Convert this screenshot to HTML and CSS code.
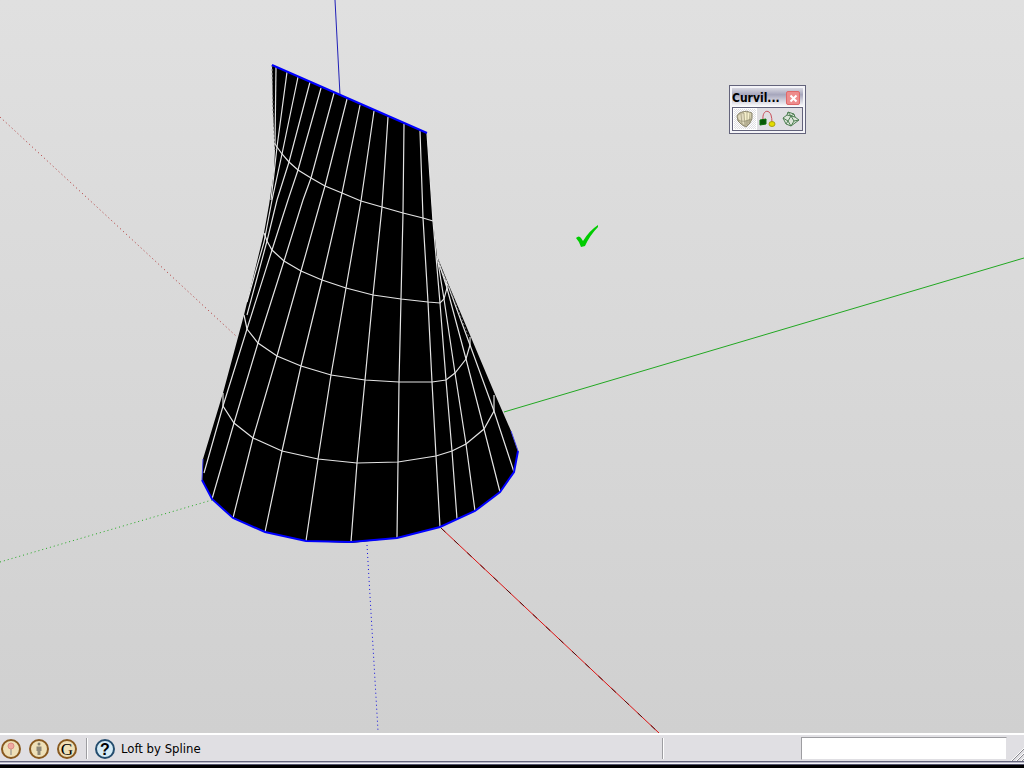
FILE: index.html
```html
<!DOCTYPE html>
<html lang="en">
<head>
<meta charset="utf-8">
<title>Loft by Spline</title>
<link rel="stylesheet" href="styles.css">
</head>
<body>
<main class="viewport">
  <svg class="scene" viewBox="0 0 1024 733" preserveAspectRatio="xMinYMin slice" role="img" aria-label="Lofted surface">
    <g class="axes">
      <path class="axis-blue" d="M335 0L340 95"/>
      <path class="axis-blue dotted" d="M367 545L378 731"/>
      <path class="axis-green" d="M504 412L1024 258"/>
      <path class="axis-green dotted" d="M0 562L212 500"/>
      <path class="axis-red" d="M441 528L659 733"/>
      <path class="axis-dash" d="M441 528L659 733"/>
      <path class="axis-red dotted" d="M0 117L236 336"/>
    </g>
    <path class="surface" d="M272 65L427 133L433 221L437 256L448 283L470 335L494 392L511 431L518 451L514 472L500 492L475 511L440 527L397 538L351 543L306 541L265 532L233 518L212 499L202 480L203 459L223 393L244 315L264 233L269 205L274 172L275 150L273 110Z"/>
    <g class="mesh">
      <path d="M275 144L277 147L282 154L289 162L298 170L311 178L325 186L342 193L361 201L382 207L403 213L423 218L433 221"/>
      <path d="M264 233L267 241L272 250L284 261L301 271L322 280L346 288L373 295L401 299L428 302L440 303L444 299L447 288L446 280"/>
      <path d="M244 315L247 329L258 343L277 356L301 366L331 375L365 380L399 382L432 382L446 380L455 373L466 359L470 345L470 337"/>
      <path d="M223 393L223 406L234 423L253 438L282 451L318 459L357 463L398 462L436 456L452 451L466 444L484 429L494 411L494 395"/>
      <path d="M276 67L275 144"/>
      <path d="M287 72L277 147L271 200"/>
      <path d="M298 77L282 154L272 200L264 242L247 302"/>
      <path d="M310 82L289 162L277 200L267 241L247 315"/>
      <path d="M321 88L298 170L288 200L272 250L247 329L223 406L204 473"/>
      <path d="M334 93L311 178L303 200L284 261L258 343L234 423L212 499"/>
      <path d="M347 99L325 186L321 200L301 271L277 356L253 438L233 518"/>
      <path d="M360 105L342 193L322 280L301 366L282 451L265 532"/>
      <path d="M374 111L361 201L346 288L331 375L318 459L306 541"/>
      <path d="M388 117L382 207L373 295L365 380L357 463L351 542"/>
      <path d="M404 124L403 213L401 299L399 382L398 462L397 538"/>
      <path d="M420 131L423 218L428 302L432 382L436 456L440 527"/>
      <path d="M427 133L433 221L440 303L446 380L452 451L457 519"/>
      <path d="M437 256L444 299L455 373L466 444L475 511"/>
      <path d="M438 260L447 288L466 359L484 429L500 492"/>
      <path d="M438 262L449 288L470 345L494 411L514 472"/>
      <path class="faint" d="M438 260L455 302L470 340M272 65L273 110L275 150"/>
    </g>
    <path class="profile" d="M272 65L427 133M202 480L212 499L233 518L265 532L306 541L351 542L397 538L440 527L475 511L500 492L514 472L518 451"/>
    <path class="profile-thin" d="M203 459L202 480M511 431L518 451"/>
    <path class="check" d="M576 238Q579 235 581 238L583 241Q589 231 598 225L598 227Q590 235 585 246L581 247Q579 241 576 238Z"/>
  </svg>

  <section class="palette" aria-label="Curviloft">
    <header class="palette-head">
      <span class="palette-title">Curvil...</span>
      <button class="close" type="button" aria-label="Close"><svg width="9" height="9" viewBox="0 0 9 9"><path d="M1.500 1.500L7.500 7.500M7.500 1.500L1.500 7.500"/></svg></button>
    </header>
    <div class="tools">
      <button class="tool active" type="button" aria-label="Loft by Spline"><svg width="18" height="18" viewBox="0 0 18 18">
        <path d="M1 6Q2 3 6 2Q10 0 16 3Q17 9 14 13L10 17Q5 15 2 11Z" fill="#c4bd9f" stroke="#8d8870"/>
        <path d="M2 6Q5 3 8 4L9 15Q3 12 2 6Z" fill="#e2dbc0"/>
        <path d="M8 2L15 3L14 9L8 11Z" fill="#f6f0cc"/>
        <path d="M5 4L6 14M8 3L9 16M11 2L11 15M14 3L13 13M2 10Q8 13 15 9" fill="none" stroke="#8d886c" stroke-width=".6"/>
      </svg></button>
      <button class="tool" type="button" aria-label="Loft along Path"><svg width="18" height="18" viewBox="0 0 18 18">
        <path d="M4 10C3 0 10 -1 12 5Q13 8 13 13" fill="none" stroke="#c9515b"/>
        <path d="M1 10L7 9L7 14L1 15Z" fill="#075807" stroke="#087008"/>
        <ellipse cx="13" cy="14" rx="3" ry="2.500" fill="#e4dc00" stroke="#aaa412"/>
      </svg></button>
      <button class="tool" type="button" aria-label="Skinning"><svg width="18" height="18" viewBox="0 0 18 18">
        <path d="M1 8L5 5L6 2L12 4L13 7L17 10L9 16L4 14Z" fill="#dce5da" stroke="#4e7f53"/>
        <path d="M5 5L9 6L13 7M6 2L9 6L12 4M1 8L6 11L9 6L12 11L17 10M4 14L6 11L9 16L12 11" fill="none" stroke="#4e7f53"/>
      </svg></button>
    </div>
  </section>
</main>

<footer class="status">
  <div class="status-row">
    <div class="badges">
      <button class="badge" type="button" aria-label="Geo-location"><svg width="22" height="22" viewBox="0 0 22 22"><circle class="ring" cx="11" cy="11" r="9"/><path d="M10 11H12V17H10Z" fill="#b9b29f"/><circle cx="11" cy="8" r="3" fill="#efa9a0" stroke="#dc8d84"/></svg></button>
      <button class="badge" type="button" aria-label="Credits"><svg width="22" height="22" viewBox="0 0 22 22"><circle class="ring" cx="11" cy="11" r="9"/><circle cx="11" cy="6" r="1.500" fill="#85806f"/><path d="M8.500 8.500H13.500V13H12.500V17H9.500V13H8.500Z" fill="#8e8878"/></svg></button>
      <button class="badge" type="button" aria-label="Google"><svg width="22" height="22" viewBox="0 0 22 22"><circle class="ring" cx="11" cy="11" r="9"/><text class="letter" x="11" y="17">G</text></svg></button>
    </div>
    <span class="rule"></span>
    <button class="badge help" type="button" aria-label="Help"><svg width="22" height="22" viewBox="0 0 22 22"><circle class="ring blue" cx="11" cy="11" r="9"/><text class="question" x="11" y="17">?</text></svg></button>
    <span class="message">Loft by Spline</span>
    <span class="rule"></span>
    <div class="measure"><input class="value" type="text" aria-label="Measurements"></div>
    <svg class="grip" width="14" height="14" viewBox="0 0 14 14" aria-hidden="true"><path class="grip-light" d="M1 14L14 1M6 14L14 6M11 14L14 11"/><path class="grip-dark" d="M2 14L14 2M7 14L14 7M12 14L14 12"/></svg>
  </div>
  <div class="edge"></div>
</footer>
</body>
</html>
```
FILE: styles.css
```css
* { box-sizing: border-box; }

body {
  margin: 0;
  height: 100vh;
  display: flex;
  flex-direction: column;
  overflow: hidden;
  background: #000;
  font-family: "DejaVu Sans Condensed", "DejaVu Sans", sans-serif;
  font-size: 12px;
  color: #000;
}

button {
  padding: 0;
  border: 0;
  background: none;
  font: inherit;
}

svg { display: block; }

.viewport {
  position: relative;
  flex: 1;
  min-height: 0;
  overflow: hidden;
  background: linear-gradient(#e0e0e0, #d0d0d0);
}

.scene { width: 100%; height: 100%; }

.axes path { fill: none; stroke-width: 1; }
.axes .axis-blue { stroke: #2020b8; }
.axes .axis-green { stroke: #22a822; }
.axes .axis-red { stroke: #dc1010; }
.axes .axis-dash { stroke: #501010; stroke-dasharray: 6 12; }
.axes .dotted { stroke-dasharray: 1 3; }
.axes .axis-blue.dotted { stroke: #1010e0; }
.axes .axis-red.dotted { stroke: #b03030; }

.surface { fill: #000; }
.mesh path { fill: none; stroke: #e4e4e4; stroke-width: 1.2; }
.mesh .faint { stroke: #777; stroke-width: 1; stroke-dasharray: 2 2; }
.profile { fill: none; stroke: #0000ff; stroke-width: 2; }
.profile-thin { fill: none; stroke: #4444f0; stroke-width: 1; }
.check { fill: #00cc00; }

.palette {
  position: absolute;
  top: 85px;
  right: 218px;
  width: 77px;
  padding: 2px;
  border: 1px solid #63637b;
  background: #f4f4f8;
}

.palette-head {
  display: flex;
  align-items: center;
  justify-content: space-between;
  height: 19px;
  padding: 1px 3px 0 0;
  background: linear-gradient(#d8d8e2, #a6a6bc 35%, #d0d0dc 65%, #fff);
}

.palette-title { font-size: 12px; font-weight: bold; }

.close {
  display: grid;
  place-items: center;
  width: 14px;
  height: 14px;
  border: 1px solid #e06868;
  border-radius: 2px;
  background: #ee8c8c;
}

.close path { fill: none; stroke: #fff; stroke-width: 2; }

.tools {
  display: flex;
  height: 24px;
  border: 1px solid #63637b;
  background: #e0dfe3;
}

.tool {
  flex: 1;
  display: grid;
  place-items: center;
}

.tool.active {
  border: 1px solid #fff;
  background: repeating-conic-gradient(#fff 0 25%, #e0dfe3 0 50%) 0 0 / 2px 2px;
}

.status { background: #e0dfe3; }

.status-row {
  display: flex;
  align-items: center;
  height: 28px;
  padding-top: 1px;
  border-top: 2px solid #fff;
}

.badges { display: flex; gap: 6px; }
.badge { flex: none; width: 22px; height: 22px; }
.ring { fill: #eee0b8; stroke: #88591f; stroke-width: 2; }
.ring.blue { fill: #d5ebf6; stroke: #244d6e; }

.letter {
  font: 17px "Liberation Serif", serif;
  text-anchor: middle;
}

.question {
  font: bold 16px "Liberation Sans", sans-serif;
  text-anchor: middle;
}

.rule {
  flex: none;
  width: 2px;
  height: 21px;
  border-left: 1px solid #9d9da1;
  border-right: 1px solid #fff;
}

.badges + .rule { margin: 0 6px 0 8px; }
.message { flex: 1; padding-left: 5px; font-size: 13px; white-space: nowrap; }

.measure {
  display: flex;
  justify-content: flex-end;
  width: 343px;
}

.value {
  width: 206px;
  height: 23px;
  padding: 0 4px;
  border: 1px solid;
  border-color: #9d9da1 #e0dfe3 #e0dfe3 #9d9da1;
  outline: 0;
  background: #fff;
  font: inherit;
}

.grip { flex: none; align-self: flex-end; margin-left: 3px; }
.grip path { fill: none; }
.grip-light { stroke: #fff; }
.grip-dark { stroke: #8a8a90; }

.edge {
  height: 7px;
  border-top: 1px solid #65657d;
  background: linear-gradient(#b8b8c8 0 1px, #f4f4f8 1px 2px, #55556c 2px 3px, #000 3px);
}
```
